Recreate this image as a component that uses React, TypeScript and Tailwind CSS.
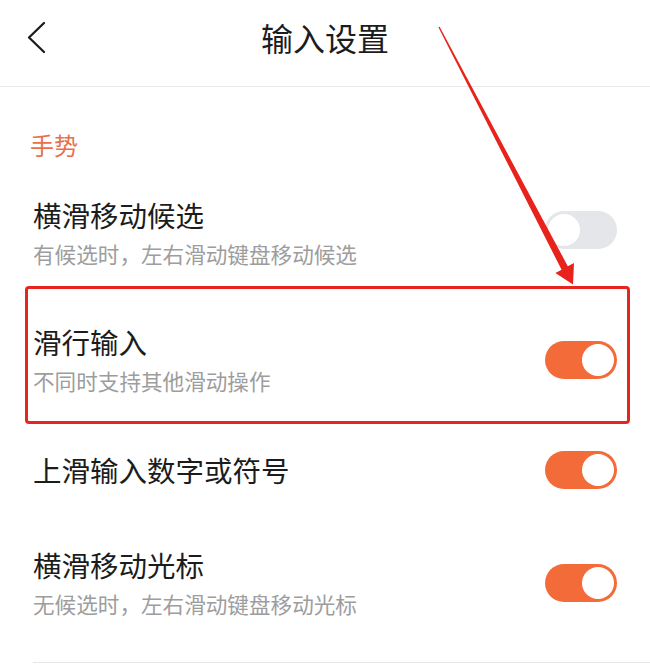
import React from 'react';

type Item = {
  title: string;
  desc?: string;
  on: boolean;
};

const Toggle: React.FC<{ on: boolean }> = ({ on }) => (
  <div
    className={
      on
        ? 'flex h-[38px] w-[72px] shrink-0 items-center justify-end rounded-full bg-[#f46b3a] p-[3px]'
        : 'flex h-[38px] w-[72px] shrink-0 items-center justify-start rounded-full bg-[#e4e6ea] p-[3px]'
    }
  >
    <div className="h-[32px] w-[32px] rounded-full bg-white" />
  </div>
);

const RowText: React.FC<{ item: Item }> = ({ item }) => (
  <div className="flex flex-col gap-[6px]">
    <div className="text-[28.5px] leading-[36px] text-[#1c1c1c]">{item.title}</div>
    {item.desc && (
      <div className="text-[21.6px] leading-[30px] text-[#9d9d9d]">{item.desc}</div>
    )}
  </div>
);

export default function App() {
  return (
    <div
      className="relative h-[671px] w-[650px] overflow-hidden bg-white"
      style={{ fontFamily: '"Noto Sans CJK SC", "Noto Sans", sans-serif' }}
    >
      {/* header */}
      <div className="relative flex h-[87px] items-center justify-center border-b border-[#e8e8e8] pb-[13px]">
        <svg
          className="absolute left-[23px] top-[20px]"
          width="28"
          height="36"
          viewBox="0 0 28 36"
          fill="none"
        >
          <polyline
            points="21,3 6,17.5 21,32"
            stroke="#1c1c1c"
            strokeWidth="2.3"
            strokeLinecap="round"
            strokeLinejoin="round"
          />
        </svg>
        <div className="text-[32px] leading-[40px] font-normal text-[#1c1c1c]">输入设置</div>
      </div>

      {/* section label */}
      <div className="px-[30px] pt-[42px] pb-[13px] text-[24px] leading-[32px] text-[#e8704b]">
        手势
      </div>

      <div className="pl-[25px] pr-[20px]">
        <div className="flex h-[112px] items-center justify-between pl-[8px] pr-[13px]">
          <div className="pt-[5px]">
            <RowText item={{ title: '横滑移动候选', desc: '有候选时，左右滑动键盘移动候选', on: false }} />
          </div>
          <Toggle on={false} />
        </div>

        <div className="flex h-[138px] items-center justify-between rounded-[4px] border-[3px] border-[#e4261f] pt-[10px] pl-[5px] pr-[10px]">
          <RowText item={{ title: '滑行输入', desc: '不同时支持其他滑动操作', on: true }} />
          <Toggle on />
        </div>

        <div className="flex h-[92px] items-center justify-between pl-[8px] pr-[13px]">
          <RowText item={{ title: '上滑输入数字或符号', on: true }} />
          <Toggle on />
        </div>

        <div className="flex h-[146px] items-center justify-between pb-[12px] pl-[8px] pr-[13px]">
          <RowText item={{ title: '横滑移动光标', desc: '无候选时，左右滑动键盘移动光标', on: true }} />
          <Toggle on />
        </div>
      </div>
      <div className="ml-[33px] border-t border-[#e6e6e6]" />

      {/* annotation arrow */}
      <svg
        className="pointer-events-none absolute left-0 top-0"
        width="650"
        height="671"
        viewBox="0 0 650 671"
      >
        <polygon
          points="438.4,27.3 561.6,269.8 555.4,273 573,284.5 574,263 567.8,266.2 439.6,26.7"
          fill="#e8231b"
        />
      </svg>
    </div>
  );
}
